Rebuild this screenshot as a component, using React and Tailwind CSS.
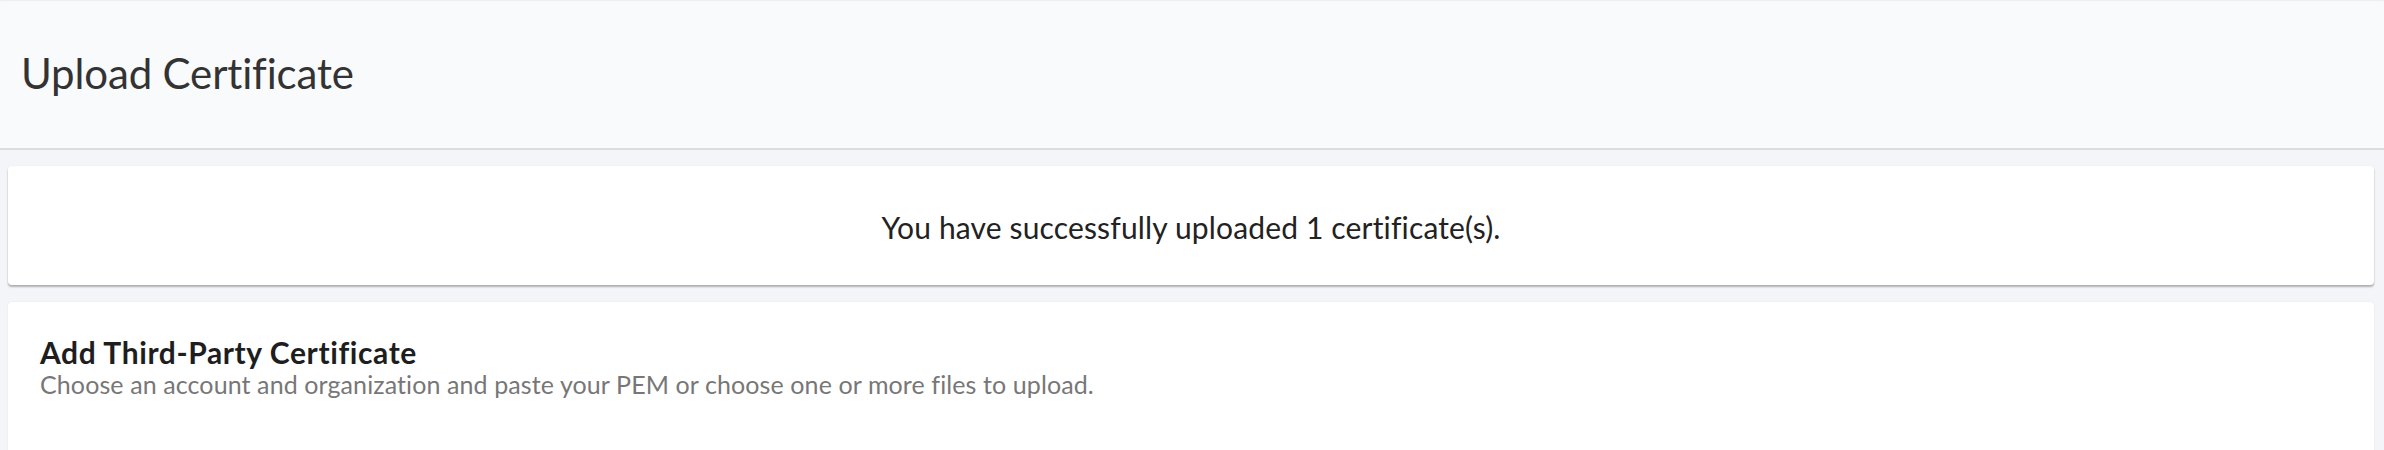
export default function App() {
  return (
    <div
      className="w-[2384px] h-[450px] overflow-hidden bg-[#f4f5f8]"
      style={{ fontFamily: "Lato, 'Noto Sans', sans-serif" }}
    >
      <header className="h-[150px] bg-[#f9fafc] border-b-2 border-[#dcdde0] shadow-[inset_0_2px_2px_-1px_rgba(0,0,0,0.06)] flex items-center pl-[21px] pb-[3px]">
        <h1 className="text-[42px] leading-none text-[#333333] font-normal tracking-[-0.15px]">
          Upload Certificate
        </h1>
      </header>
      <div className="flex flex-col gap-[17px] pt-4 pl-2 pr-[10px]">
        <div className="h-[119px] bg-white rounded-[4px] shadow-[0_2px_2px_rgba(0,0,0,0.28),0_0_2px_rgba(0,0,0,0.06)] flex items-center justify-center">
          <p className="text-[30px] leading-none text-[#222222] pt-[2px] tracking-[0.15px]">
            You have successfully uploaded 1 certificate(s).
          </p>
        </div>
        <div className="h-[200px] bg-white rounded-[4px] shadow-[0_0_2px_rgba(0,0,0,0.08)] px-8 pt-[33px]">
          <h2 className="text-[30px] leading-[34px] font-bold text-[#1e1e1e] tracking-[0.6px]">
            Add Third-Party Certificate
          </h2>
          <p className="text-[25px] leading-[31px] text-[#777777] tracking-[0.1px]">
            Choose an account and organization and paste your PEM or choose one or more files to upload.
          </p>
        </div>
      </div>
    </div>
  );
}
